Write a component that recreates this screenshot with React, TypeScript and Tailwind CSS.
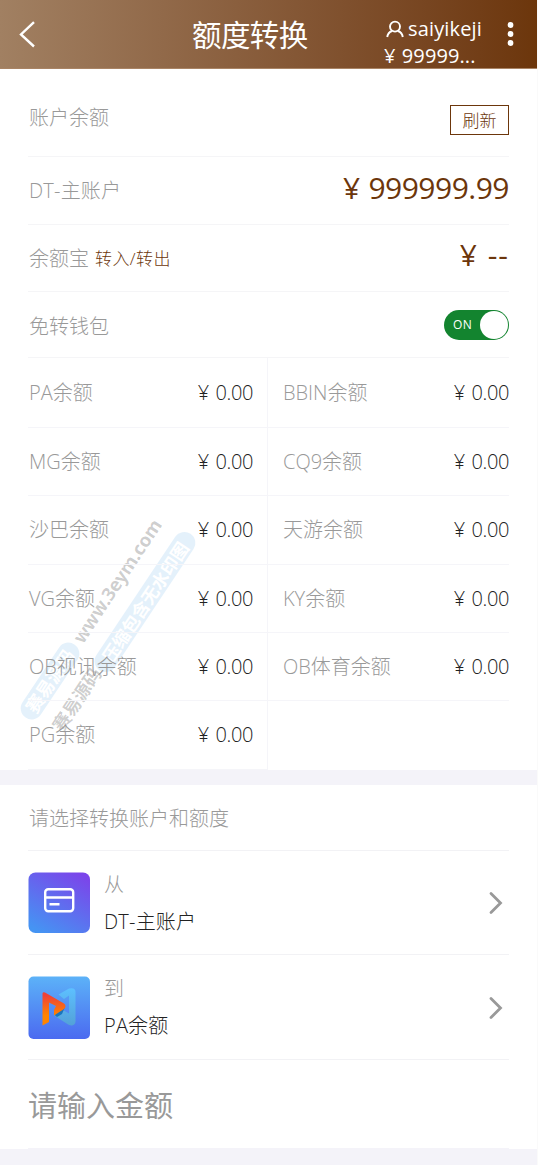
import type { ReactNode } from "react";

const balances = [
  { name: "PA余额", h: "h-[70px]" },
  { name: "BBIN余额", h: "h-[70px]" },
  { name: "MG余额", h: "h-[68px]" },
  { name: "CQ9余额", h: "h-[68px]" },
  { name: "沙巴余额", h: "h-[69px]" },
  { name: "天游余额", h: "h-[69px]" },
  { name: "VG余额", h: "h-[68px]" },
  { name: "KY余额", h: "h-[68px]" },
  { name: "OB视讯余额", h: "h-[68px]" },
  { name: "OB体育余额", h: "h-[68px]" },
  { name: "PG余额", h: "h-[69px]" },
];

function Header() {
  return (
    <header className="flex h-[69px] border-b border-[#a98465] bg-linear-to-r from-[#a18062] to-[#6c360b] text-white">
      <div className="flex w-[192px] pl-[19px] pt-[21px]">
        <svg width="17" height="27" viewBox="0 0 17 27" fill="none" stroke="currentColor" strokeWidth="2.4">
          <path d="M15 1.2 2 13.5 15 25.5" />
        </svg>
      </div>
      <h1 className="w-[192px] pt-[13px] text-[29.5px] leading-[44px] tracking-[-0.6px] whitespace-nowrap font-normal">额度转换</h1>
      <div className="w-[122px] pt-[15px] text-[20px] leading-[27px] font-medium whitespace-nowrap">
        <div className="flex h-[27px] items-center gap-[4px] pl-[2px]">
          <svg width="18" height="18" viewBox="0 0 18 18" fill="none" stroke="currentColor" strokeWidth="1.9">
            <circle cx="9" cy="6.6" r="5" />
            <path d="M1.2 17c.5-3.3 2-5 4.8-6M16.8 17c-.5-3.3-2-5-4.8-6" />
          </svg>
          <span className="tracking-[0.15px]">saiyikeji</span>
        </div>
        <div className="h-[27px] tracking-[0.1px] [word-spacing:1px]">¥ 99999...</div>
      </div>
      <svg className="mt-[21px]" width="9" height="27" viewBox="0 0 9 27" fill="currentColor">
        <circle cx="4.5" cy="4" r="2.9" />
        <circle cx="4.5" cy="13" r="2.9" />
        <circle cx="4.5" cy="22" r="2.9" />
      </svg>
    </header>
  );
}

function Chevron() {
  return (
    <svg width="16" height="24" viewBox="0 0 16 24" fill="none" stroke="#999" strokeWidth="2.8" strokeLinecap="round">
      <path d="M3 2.5 12.5 12 3 21.5" />
    </svg>
  );
}

function CardIcon() {
  return (
    <svg width="62" height="62" viewBox="0 0 62 62" fill="none">
      <defs>
        <linearGradient id="card" x1="0.2" y1="1" x2="0.8" y2="0">
          <stop stopColor="#4594f3" />
          <stop offset="1" stopColor="#7b45ea" />
        </linearGradient>
      </defs>
      <rect x="0.5" y="0.5" width="61.5" height="60.5" rx="7" fill="url(#card)" />
      <rect x="17.2" y="17.2" width="28" height="22" rx="3" stroke="#fff" strokeWidth="2.4" />
      <path d="M17 25.5h28M21.5 32.2h10" stroke="#fff" strokeWidth="2.4" />
    </svg>
  );
}

function PlatformIcon() {
  return (
    <svg width="62" height="64" viewBox="0 0 62 64" fill="none">
      <defs>
        <linearGradient id="tile" x1="0" y1="0" x2="0" y2="1">
          <stop stopColor="#5cb2f8" />
          <stop offset="1" stopColor="#4b6af0" />
        </linearGradient>
        <linearGradient id="play" x1="0" y1="0" x2="0" y2="1">
          <stop offset="0.1" stopColor="#ee4138" />
          <stop offset="0.7" stopColor="#ff8400" />
        </linearGradient>
        <linearGradient id="frame" x1="0" y1="0" x2="0" y2="1">
          <stop stopColor="#5dc0ff" />
          <stop offset="1" stopColor="#53a1d8" />
        </linearGradient>
      </defs>
      <rect x="0.5" y="0.5" width="61.5" height="62.5" rx="5" fill="url(#tile)" />
      <path d="M30.5 18.5 41 12.5Q47.5 11 47.5 16V46Q46.5 50.5 41 49L26 39.5 35 34 41 37.5V19.500L36 23Z" fill="url(#frame)" />
      <path d="M26 38.5 37 31 34 38 29 41Z" fill="#1976be" />
      <path d="M14.5 17.5Q15 15.5 17 16.5L36 27.5Q39 30 36 33L26 39.5V34L28 30 21 26.5V46L14.5 49.5Z" fill="url(#play)" />
    </svg>
  );
}

function Transfer({ icon, label, value, tall }: { icon: ReactNode; label: string; value: string; tall?: boolean }) {
  return (
    <div className={`ml-[28px] mr-[29px] flex border-b border-[#f2f2f5] ${tall ? "h-[105px]" : "h-[104px]"}`}>
      <div className="pt-[21px]">{icon}</div>
      <div className="flex-1 pl-[14px] pt-[19px] text-[20px]">
        <div className="h-[37px] leading-[30px] text-[#999]">{label}</div>
        <div className="leading-[30px] tracking-[0.2px] text-[#222]">{value}</div>
      </div>
      <div className={tall ? "pt-[41px] pr-[5px]" : "pt-[40px] pr-[5px]"}>
        <Chevron />
      </div>
    </div>
  );
}

function Watermark() {
  const anchor = "absolute flex h-0 w-0 items-center justify-center";
  return (
    <div className="pointer-events-none absolute -top-[69px] left-0 -z-10 font-bold whitespace-nowrap">
      <div className={`${anchor} left-[49.5px] top-[681px]`}>
        <span className="flex h-[22px] w-[88px] shrink-0 -rotate-[56.3deg] items-center justify-center rounded-full bg-[#4ba3e3]/15 text-[18px] text-white">赛易源码</span>
      </div>
      <div className={`${anchor} left-[116.5px] top-[581px]`}>
        <span className="-rotate-[56.3deg] font-['Noto_Sans',sans-serif] text-[18.5px] tracking-[-0.2px] text-black/20">www.3eym.com</span>
      </div>
      <div className={`${anchor} left-[77px] top-[699px]`}>
        <span className="-rotate-[56.3deg] text-[18px] text-black/20">赛易源码</span>
      </div>
      <div className={`${anchor} left-[144.5px] top-[602px]`}>
        <span className="flex h-[22px] w-[164px] shrink-0 -rotate-[56.3deg] items-center justify-center rounded-full bg-[#4ba3e3]/15 text-[17.5px] text-white">压缩包含无水印图</span>
      </div>
    </div>
  );
}

export default function App() {
  return (
    <div className="relative h-[1165px] w-[538px] overflow-hidden bg-[#f4f3f9] font-['Open_Sans','Noto_Sans_CJK_SC',sans-serif] font-light">
      <Header />
      <main className="relative isolate bg-white text-[20px] text-[#999]">
        <Watermark />
        <div className="ml-[28px] mr-[29px]">
          <div className="flex h-[88px] justify-between border-b border-[#f5f5f7]">
            <span className="pt-[34px] pl-px leading-[30px]">账户余额</span>
            <button className="mt-[36px] h-[30px] w-[59px] border border-[#6c360b] text-[17px] leading-[29px] text-[#6c360b]">刷新</button>
          </div>
          <div className="flex h-[68px] justify-between border-b border-[#f5f5f7]">
            <span className="pt-[19px] pl-px leading-[30px] tracking-[0.2px]">DT-主账户</span>
            <span className="pt-[11px] text-[30px] leading-[40px] tracking-[-0.5px] [word-spacing:1.5px] font-normal text-[#6c360b]">¥ 999999.99</span>
          </div>
          <div className="flex h-[67px] justify-between border-b border-[#f5f5f7]">
            <span className="flex gap-[6px] pt-[19px] pl-px leading-[30px]">
              余额宝
              <a className="text-[17px] tracking-[0.4px] text-[#6c360b]">转入/转出</a>
            </span>
            <span className="pt-[10px] text-[30px] leading-[40px] tracking-[1px] [word-spacing:1px] font-normal text-[#6c360b]">¥ --</span>
          </div>
          <div className="flex h-[66px] justify-between border-b border-[#f5f5f7]">
            <span className="pt-[20px] pl-px leading-[30px]">免转钱包</span>
            <div className="mt-[18px] flex h-[30px] w-[65px] items-center justify-between rounded-full bg-[#13842f] pl-[9px] pr-px">
              <span className="text-[12px] font-medium tracking-[0.5px] text-white">ON</span>
              <span className="h-[28px] w-[28px] rounded-full bg-white" />
            </div>
          </div>
          <div className="grid grid-cols-[240px_241px]">
            {balances.map((b, i) => (
              <div
                key={b.name}
                className={`flex items-center justify-between border-b border-[#f5f5f9] ${b.h} ${i % 2 ? "pl-[15px]" : "border-r pl-px pr-[14px]"}`}
              >
                <span>{b.name}</span>
                <span className="tracking-[-0.4px] [word-spacing:2px] text-[#222]">¥ 0.00</span>
              </div>
            ))}
          </div>
        </div>
        <div className="h-[15px] bg-[#f4f3f9]" />
        <div className="ml-[28px] mr-[29px] h-[66px] border-b border-[#f2f2f5] pt-[19px] pl-px leading-[30px]">请选择转换账户和额度</div>
        <Transfer icon={<CardIcon />} label="从" value="DT-主账户" />
        <Transfer icon={<PlatformIcon />} label="到" value="PA余额" tall />
        <div className="ml-[28px] mr-[29px] h-[89px] border-b border-[#f4f3f9] pt-[24px] text-[29px] leading-[44px] font-normal">请输入金额</div>
      </main>
      <div className="absolute top-0 right-0 h-[1165px] w-px bg-[#fafafa]" />
    </div>
  );
}
